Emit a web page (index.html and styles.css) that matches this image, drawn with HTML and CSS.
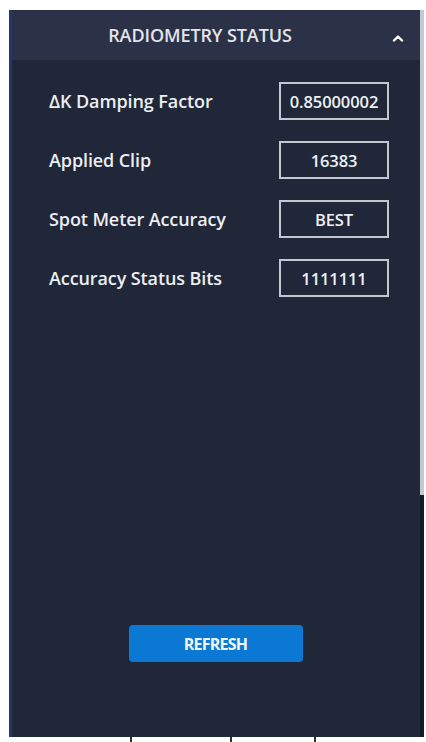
FILE: index.html
```html
<!DOCTYPE html>
<html>
<head>
  <meta charset="UTF-8">
  <title>Radiometry Status</title>
  <link rel="stylesheet" href="styles.css">
</head>
<body>
  <div class="frame">
    <div class="panel-row">
      <!-- 面板 -->
      <div class="panel">
        <div class="panel-header">
          <span class="panel-title">RADIOMETRY STATUS</span>
          <svg class="collapse-icon" width="12" height="8" viewBox="0 0 12 8">
            <path d="M2 6.5 L6 2.5 L10 6.5" fill="none" stroke="#ffffff" stroke-width="2.4" stroke-linecap="round" stroke-linejoin="round"/>
          </svg>
        </div>
        <div class="panel-body">
          <div class="field-list">
            <div class="field-row">
              <span class="field-label">ΔK Damping Factor</span>
              <span class="field-value">0.85000002</span>
            </div>
            <div class="field-row">
              <span class="field-label">Applied Clip</span>
              <span class="field-value">16383</span>
            </div>
            <div class="field-row">
              <span class="field-label">Spot Meter Accuracy</span>
              <span class="field-value">BEST</span>
            </div>
            <div class="field-row">
              <span class="field-label">Accuracy Status Bits</span>
              <span class="field-value">1111111</span>
            </div>
          </div>
          <div class="button-bar">
            <button type="button" class="refresh-btn">REFRESH</button>
          </div>
        </div>
      </div>
      <!-- 滚动条 -->
      <div class="scroll-track">
        <div class="scroll-thumb"></div>
        <div class="scroll-rest"></div>
      </div>
    </div>
    <div class="ticks">
      <span class="tick"></span>
      <span class="tick"></span>
      <span class="tick"></span>
    </div>
  </div>
</body>
</html>
```

FILE: styles.css
```css
body {
  margin: 0;
  background: #ffffff;
  font-family: "Open Sans", "Noto Sans", Arial, sans-serif;
}
.frame {
  padding: 10px 0 0 9px;
  width: 415px;
}
.panel-row {
  display: flex;
  height: 727px;
}
.panel {
  flex: 1;
  display: flex;
  flex-direction: column;
  background: #1f2739;
  border-left: 3px solid #1d3a6c;
}
.panel-header {
  height: 50px;
  background: #2b3248;
  display: flex;
  align-items: center;
  justify-content: center;
  position: relative;
}
.panel-title {
  color: #e3e5ea;
  font-size: 18px;
  font-weight: 600;
  letter-spacing: -0.1px;
  padding-right: 32px;
}
.collapse-icon {
  position: absolute;
  right: 16px;
  top: 24px;
}
.panel-body {
  flex: 1;
  display: flex;
  flex-direction: column;
  padding: 22px 31px 0 37px;
}
.field-list {
  display: flex;
  flex-direction: column;
  gap: 21px;
}
.field-row {
  display: flex;
  align-items: center;
  justify-content: space-between;
}
.field-label {
  color: #eceef2;
  font-size: 18px;
  font-weight: 600;
  letter-spacing: -0.1px;
}
.field-value {
  width: 106px;
  height: 34px;
  border: 2px solid #c3c7cf;
  display: flex;
  align-items: center;
  justify-content: center;
  color: #eef0f4;
  font-size: 16.5px;
  font-weight: 600;
  letter-spacing: -0.1px;
}
.button-bar {
  display: flex;
  justify-content: center;
  margin-top: auto;
  margin-bottom: 75px;
  padding-right: 7px;
}
.refresh-btn {
  width: 174px;
  height: 37px;
  background: #0b78d4;
  color: #f2f6fb;
  border: none;
  border-radius: 4px;
  font-family: "Open Sans", Arial, sans-serif;
  font-size: 16px;
  font-weight: 700;
  letter-spacing: -0.8px;
}
.scroll-track {
  width: 4px;
  display: flex;
  flex-direction: column;
}
.scroll-thumb {
  height: 485px;
  background: #c4c8cf;
}
.scroll-rest {
  flex: 1;
  background: #131c2e;
}
.ticks {
  display: flex;
  padding-left: 121px;
  gap: 98px;
}
.tick {
  width: 2px;
  height: 5px;
  background: #2a2f3a;
}
.tick:last-child {
  margin-left: -16px;
}
```
